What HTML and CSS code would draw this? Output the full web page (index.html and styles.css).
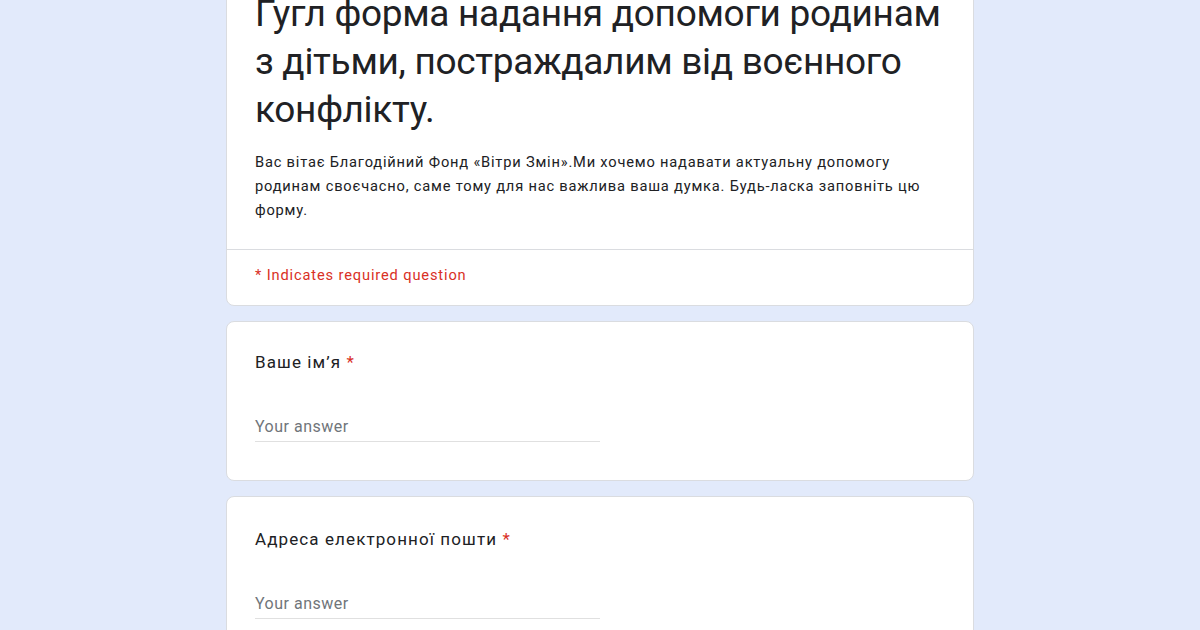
FILE: index.html
```html
<!DOCTYPE html>
<html lang="uk">
<head>
<meta charset="utf-8">
<title>Гугл форма</title>
<link rel="stylesheet" href="styles.css">
</head>
<body>
<main class="form">
  <section class="card header-card">
    <div class="header-body">
      <h1 class="form-title">Гугл форма надання допомоги родинам з дітьми, постраждалим від воєнного конфлікту.</h1>
      <p class="form-desc">Вас вітає Благодійний Фонд «Вітри Змін».Ми хочемо надавати актуальну допомогу родинам своєчасно, саме тому для нас важлива ваша думка. Будь-ласка заповніть цю форму.</p>
    </div>
    <div class="required-note">* Indicates required question</div>
  </section>

  <section class="card question">
    <div class="q-title">Ваше ім’я <span class="star">*</span></div>
    <div class="answer"><span class="placeholder">Your answer</span></div>
  </section>

  <section class="card question">
    <div class="q-title">Адреса електронної пошти <span class="star">*</span></div>
    <div class="answer"><span class="placeholder">Your answer</span></div>
  </section>
</main>
</body>
</html>
```
FILE: styles.css
```css
html, body {
  margin: 0;
  padding: 0;
}
body {
  background: #e2eafb;
  font-family: Roboto, "Liberation Sans", sans-serif;
  color: #202124;
  height: 630px;
  overflow: hidden;
}
.form {
  width: 748px;
  margin: -33px auto 0;
  display: flex;
  flex-direction: column;
  gap: 15px;
}
.card {
  background: #fff;
  border: 1px solid #dadce0;
  border-radius: 8px;
  box-sizing: border-box;
}
.header-body {
  padding: 22px 28px 27px;
  border-bottom: 1px solid #dadce0;
}
.form-title {
  margin: 0;
  font-family: Roboto, sans-serif;
  font-weight: 400;
  font-size: 37px;
  line-height: 48px;
  letter-spacing: -0.3px;
  color: #202124;
}
.form-desc {
  margin: 16px 0 0;
  font-size: 14.67px;
  line-height: 24px;
  letter-spacing: 0.8px;
}
.required-note {
  padding: 13px 28px 18px;
  font-size: 14.67px;
  line-height: 24px;
  letter-spacing: 0.85px;
  color: #d93025;
}
.question {
  padding: 28px 28px 38px;
}
.question + .question {
  padding-top: 30px;
}
.q-title {
  font-size: 17px;
  line-height: 24px;
  letter-spacing: 1.1px;
}
.star {
  color: #d93025;
}
.answer {
  margin-top: 41px;
  width: 345px;
  border-bottom: 1px solid #e0e0e0;
  padding-bottom: 2px;
}
.placeholder {
  font-size: 16px;
  line-height: 24px;
  letter-spacing: 0.5px;
  color: #70757a;
  display: block;
}
```
